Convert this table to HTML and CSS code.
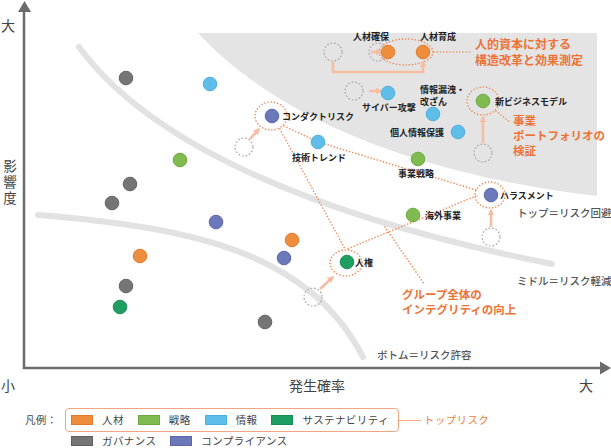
FILE: index.html
```
<!DOCTYPE html>
<html lang="ja">
<head>
<meta charset="utf-8">
<title>リスクマップ</title>
<link rel="stylesheet" href="styles.css">
</head>
<body>
<div class="page">
  <svg class="chart" width="611" height="400" viewBox="0 0 611 400" xmlns="http://www.w3.org/2000/svg">
    <defs>
      <marker id="ah" viewBox="0 0 10 10" refX="8" refY="5" markerWidth="2.6" markerHeight="2.6" orient="auto">
        <path d="M0,0 L10,5 L0,10 z" class="ahead"/>
      </marker>
    </defs>

    <!-- top risk zone -->
    <path class="zone-fill" d="M198,33 H597 V196 C380,170 260,100 198,33 Z"/>

    <!-- bands -->
    <path class="band" d="M79,47 C140,130 280,210 552,264"/>
    <path class="band" d="M38,215 C200,228 310,255 363,357"/>

    <!-- axes -->
    <line class="axis-line" x1="24" y1="10" x2="24" y2="369"/>
    <line class="axis-line" x1="23" y1="368" x2="601" y2="368"/>
    <polygon class="axis-head" points="24.5,1 18,12 31,12"/>
    <polygon class="axis-head" points="611,368 600,361.5 600,374.5"/>

    <!-- dotted connectors -->
    <line class="dot-line" x1="434" y1="52" x2="470" y2="52"/>
    <line class="dot-line" x1="496" y1="111" x2="511" y2="123"/>
    <polyline class="dot-line" points="284,126 318,142 476,190"/>
    <line class="dot-line" x1="280" y1="129" x2="345" y2="249"/>
    <line class="dot-line" x1="476" y1="196" x2="347" y2="249"/>
    <line class="dot-line" x1="385" y1="227" x2="425" y2="285"/>

    <!-- top-risk ellipses -->
    <ellipse class="dot-ring" cx="271" cy="116" rx="16" ry="14"/>
    <ellipse class="dot-ring" cx="406" cy="52" rx="27" ry="13"/>
    <ellipse class="dot-ring" cx="483" cy="101" rx="16" ry="14"/>
    <ellipse class="dot-ring" cx="490" cy="195" rx="15" ry="13"/>
    <ellipse class="dot-ring" cx="346" cy="263" rx="16" ry="13"/>

    <!-- previous positions -->
    <circle class="ghost" cx="244" cy="147" r="9"/>
    <circle class="ghost" cx="333" cy="52" r="9"/>
    <circle class="ghost" cx="378" cy="52" r="9"/>
    <circle class="ghost" cx="354" cy="91" r="9"/>
    <circle class="ghost" cx="483" cy="153" r="9"/>
    <circle class="ghost" cx="491" cy="237" r="9"/>
    <circle class="ghost" cx="313" cy="297" r="9"/>

    <!-- movement arrows -->
    <line class="move" x1="250" y1="139" x2="259" y2="129" marker-end="url(#ah)"/>
    <polyline class="move" points="333,62 333,72 423,72 423,62" marker-end="url(#ah)"/>
    <line class="move" x1="371" y1="52" x2="381" y2="52" marker-end="url(#ah)"/>
    <line class="move" x1="369" y1="91" x2="381" y2="91" marker-end="url(#ah)"/>
    <line class="move" x1="483" y1="143" x2="483" y2="117" marker-end="url(#ah)"/>
    <line class="move" x1="491" y1="227" x2="491" y2="210" marker-end="url(#ah)"/>
    <line class="move" x1="320" y1="289" x2="333" y2="277" marker-end="url(#ah)"/>

    <!-- risks -->
    <g class="c-gov">
      <circle cx="126" cy="78" r="6.8"/>
      <circle cx="130" cy="184" r="6.8"/>
      <circle cx="112" cy="203" r="6.8"/>
      <circle cx="126" cy="286" r="6.8"/>
      <circle cx="265" cy="322" r="6.8"/>
    </g>
    <g class="c-info">
      <circle cx="210" cy="84" r="6.8"/>
      <circle cx="318" cy="142" r="6.8"/>
      <circle cx="388" cy="93" r="6.8"/>
      <circle cx="433" cy="114" r="6.8"/>
      <circle cx="458" cy="132" r="6.8"/>
    </g>
    <g class="c-strat">
      <circle cx="180" cy="160" r="6.8"/>
      <circle cx="483" cy="101" r="6.8"/>
      <circle cx="418" cy="159" r="6.8"/>
      <circle cx="413" cy="215" r="6.8"/>
    </g>
    <g class="c-sus">
      <circle cx="120" cy="307" r="6.8"/>
      <circle cx="347" cy="262" r="6.8"/>
    </g>
    <g class="c-hr">
      <circle cx="140" cy="256" r="6.8"/>
      <circle cx="292" cy="240" r="6.8"/>
      <circle cx="388" cy="52" r="6.8"/>
      <circle cx="423" cy="52" r="6.8"/>
    </g>
    <g class="c-comp">
      <circle cx="272" cy="116" r="6.8"/>
      <circle cx="216" cy="222" r="6.8"/>
      <circle cx="284" cy="258" r="6.8"/>
      <circle cx="491" cy="195" r="6.8"/>
    </g>

    <!-- risk labels -->
    <g class="lbl">
      <text x="353" y="36">人材確保</text>
      <text x="420" y="36">人材育成</text>
      <text x="362" y="107">サイバー攻撃</text>
      <text x="420" y="89">情報漏洩・</text>
      <text x="420" y="101">改ざん</text>
      <text x="390" y="132">個人情報保護</text>
      <text x="495" y="101">新ビジネスモデル</text>
      <text x="282" y="116">コンダクトリスク</text>
      <text x="292" y="157">技術トレンド</text>
      <text x="398" y="173">事業戦略</text>
      <text x="500" y="195">ハラスメント</text>
      <text x="425" y="215">海外事業</text>
      <text x="355" y="262">人権</text>
    </g>

    <!-- initiatives -->
    <g class="org">
      <text class="org-lg" x="475" y="43">人的資本に対する</text>
      <text class="org-lg" x="475" y="59">構造改革と効果測定</text>
      <text x="513" y="120">事業</text>
      <text x="513" y="135">ポートフォリオの</text>
      <text x="513" y="150">検証</text>
      <text x="402" y="294">グループ全体の</text>
      <text x="402" y="309">インテグリティの向上</text>
    </g>

    <!-- zone labels -->
    <g class="zone">
      <text x="517" y="212">トップ＝リスク回避</text>
      <text x="517" y="280">ミドル＝リスク軽減</text>
      <text x="377" y="354">ボトム＝リスク許容</text>
    </g>

    <!-- axis labels -->
    <g class="axis">
      <text x="8" y="25" text-anchor="middle">大</text>
      <text class="vertical" x="10" y="159">影響度</text>
      <text x="8" y="385" text-anchor="middle">小</text>
      <text x="317" y="385" text-anchor="middle">発生確率</text>
      <text x="586" y="385" text-anchor="middle">大</text>
    </g>
  </svg>

  <div class="legend">
    <div class="legend-row">
      <span class="legend-title">凡例：</span>
      <div class="legend-box">
        <span class="item"><span class="sw sw-hr"></span>人材</span>
        <span class="item"><span class="sw sw-strat"></span>戦略</span>
        <span class="item"><span class="sw sw-info"></span>情報</span>
        <span class="item"><span class="sw sw-sus"></span>サステナビリティ</span>
      </div>
      <span class="connector"></span>
      <span class="toprisk">トップリスク</span>
    </div>
    <div class="legend-row legend-row2">
      <span class="item"><span class="sw sw-gov"></span>ガバナンス</span>
      <span class="item"><span class="sw sw-comp"></span>コンプライアンス</span>
    </div>
  </div>
</div>
</body>
</html>
```
FILE: styles.css
```
html, body {
  margin: 0;
  padding: 0;
  background: #ffffff;
}

body {
  font-family: "Noto Sans CJK JP", "Noto Sans", sans-serif;
}

.page {
  width: 611px;
  height: 448px;
  overflow: hidden;
}

.chart {
  display: block;
}

/* chart shapes */
.zone-fill {
  fill: #e4e4e4;
}

.band {
  fill: none;
  stroke: #e2e2e2;
  stroke-width: 6;
  stroke-linecap: round;
}

.axis-line {
  stroke: #6b6b6b;
  stroke-width: 2.5;
}

.axis-head {
  fill: #6b6b6b;
}

.dot-line,
.dot-ring {
  fill: none;
  stroke: #ef8a5a;
  stroke-width: 1.6;
  stroke-dasharray: 0.01 3.2;
  stroke-linecap: round;
}

.ghost {
  fill: none;
  stroke: #a9a9a9;
  stroke-width: 1.2;
  stroke-dasharray: 1.8 1.8;
}

.move {
  fill: none;
  stroke: #f5bea2;
  stroke-width: 2.6;
}

.ahead {
  fill: #f5bea2;
}

.c-gov circle { fill: #757575; stroke: #626262; stroke-width: 1; }
.c-info circle { fill: #5fbde9; stroke: #4eaedc; stroke-width: 1; }
.c-strat circle { fill: #80bb51; stroke: #6ea83f; stroke-width: 1; }
.c-sus circle { fill: #1f9e61; stroke: #198c54; stroke-width: 1; }
.c-hr circle { fill: #ee8d3c; stroke: #e07d2c; stroke-width: 1; }
.c-comp circle { fill: #6b78ba; stroke: #5a67aa; stroke-width: 1; }

/* chart text */
.chart text {
  font-family: "Noto Sans CJK JP", "Noto Sans", sans-serif;
  dominant-baseline: central;
}

.lbl text {
  font-size: 9px;
  font-weight: 700;
  fill: #222222;
}

.org text {
  font-size: 11.5px;
  font-weight: 700;
  fill: #ec7337;
}

.org .org-lg {
  font-size: 12px;
}

.zone text {
  font-size: 10.5px;
  font-weight: 500;
  fill: #555555;
}

.axis text {
  font-size: 14px;
  fill: #444444;
}

.axis .vertical {
  font-size: 13.5px;
  writing-mode: vertical-rl;
  letter-spacing: 2.5px;
}

/* legend */
.legend {
  display: flex;
  flex-direction: column;
  gap: 2px;
  padding: 8px 0 0 25px;
  font-size: 10.5px;
  line-height: 12px;
  color: #444444;
}

.legend-row {
  display: flex;
  align-items: center;
  height: 24px;
}

.legend-title {
  width: 40px;
  letter-spacing: 0.3px;
}

.legend-box {
  display: flex;
  align-items: center;
  gap: 14px;
  height: 24px;
  box-sizing: border-box;
  padding: 0 9px 0 5px;
  border: 1.5px solid #f1a583;
  border-radius: 4px;
}

.item {
  display: flex;
  align-items: center;
  gap: 9px;
  letter-spacing: 0.4px;
}

.sw {
  display: block;
  width: 22px;
  height: 10px;
  box-sizing: border-box;
  border: 1px solid;
}

.sw-hr { background: #ee8d3c; border-color: #dd7a2a; }
.sw-strat { background: #80bb51; border-color: #6ea83f; }
.sw-info { background: #5fbde9; border-color: #4eaedc; }
.sw-sus { background: #1f9e61; border-color: #198c54; }
.sw-gov { background: #757575; border-color: #5f5f5f; }
.sw-comp { background: #6b78ba; border-color: #5a67aa; }

.connector {
  display: block;
  width: 22px;
  height: 1px;
  background: #f1a583;
}

.toprisk {
  margin-left: 3px;
  color: #ee7f40;
  letter-spacing: 0.4px;
}

.legend-row2 {
  height: 14px;
  padding-left: 46px;
  gap: 14px;
}
```
